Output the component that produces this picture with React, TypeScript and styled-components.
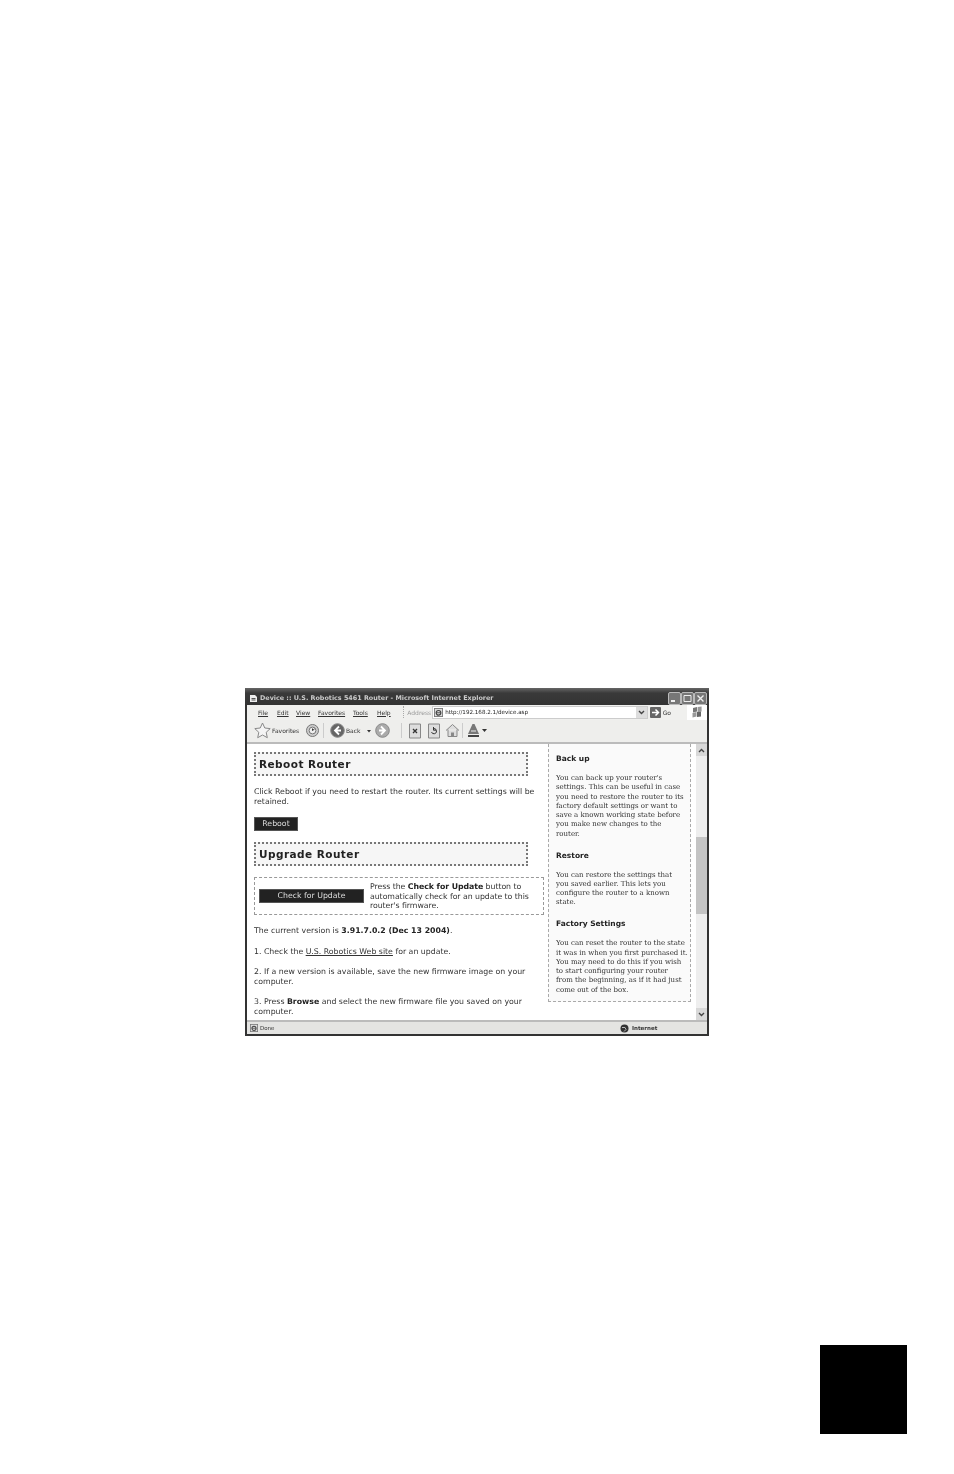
import styled, { createGlobalStyle } from "styled-components";

const Global = createGlobalStyle`
  html, body {
    margin: 0;
    background: #fff;
  }
`;

const Page = styled.div`
  width: 954px;
  height: 1474px;
  display: flex;
  flex-direction: column;
  overflow: hidden;
  background: #fff;
`;

const Window = styled.div`
  box-sizing: border-box;
  width: 464px;
  height: 348px;
  margin: 688px 0 0 245px;
  display: flex;
  flex-direction: column;
  background: #333;
  padding: 0 2px 2px;
  filter: blur(0.45px);
  font-family: "DejaVu Sans", sans-serif;
  color: #222;
`;

const TitleBar = styled.div`
  height: 17px;
  margin: 0 -2px;
  padding: 3px 2px 0 4px;
  box-sizing: border-box;
  display: flex;
  align-items: center;
  gap: 2px;
  background: linear-gradient(#666, #3a3a3a 30%, #333);
  color: #ccc;
  font-size: 6.4px;
  font-weight: 700;
  white-space: nowrap;
`;

const TitleText = styled.span`
  flex: 1;
`;

const WinButton = styled.div`
  box-sizing: border-box;
  width: 13px;
  height: 13px;
  margin-left: -2px;
  border: 1px solid #bbb;
  border-radius: 2px;
  background: #777;
  display: flex;
  align-items: center;
  justify-content: center;
`;

const MenuBar = styled.div`
  box-sizing: border-box;
  height: 15px;
  padding-bottom: 1px;
  display: flex;
  align-items: center;
  background: #f0f0ee;
  font-size: 6px;
  color: #333;
`;

const MenuItem = styled.span<{ $w: number }>`
  width: ${(p) => p.$w}px;
  text-decoration: underline;
  text-decoration-thickness: 0.5px;
  text-underline-offset: 1px;
`;

const MenuItems = styled.div`
  display: flex;
  width: 147px;
  padding-left: 11px;
`;

const Grip = styled.div`
  height: 12px;
  border-left: 1px dotted #aaa;
`;

const AddressLabel = styled.span`
  margin: 0 1px 0 3px;
  color: #999;
`;

const AddressBox = styled.div`
  box-sizing: border-box;
  width: 218px;
  height: 13px;
  display: flex;
  align-items: center;
  gap: 2px;
  background: #fff;
  border: 1px solid #ccc;
  padding-left: 1px;
  font-size: 5.6px;
  color: #222;
`;

const AddressText = styled.span`
  flex: 1;
`;

const Chevron = styled.div`
  width: 11px;
  height: 11px;
  background: #ddd;
  display: flex;
  align-items: center;
  justify-content: center;
`;

const GoGroup = styled.div`
  display: flex;
  align-items: center;
  gap: 2px;
  margin-left: 2px;
  width: 38px;
`;

const Flag = styled.div`
  width: 20px;
  height: 15px;
  margin-left: auto;
  background: #fff;
  display: flex;
  align-items: center;
  justify-content: center;
`;

const ToolBar = styled.div`
  box-sizing: border-box;
  height: 24px;
  padding: 0 0 1px 7px;
  display: flex;
  align-items: center;
  background: #eeeeec;
  border-bottom: 2px solid #bbb;
  font-size: 6px;
  color: #333;
`;

const ToolGroup = styled.div<{ $w: number }>`
  width: ${(p) => p.$w}px;
  display: flex;
  align-items: center;
  gap: 1px;
`;

const Sep = styled.div<{ $after?: number }>`
  width: 1px;
  height: 15px;
  background: #ccc;
  margin-right: ${(p) => p.$after ?? 6}px;
`;

const Body = styled.div`
  flex: 1;
  min-height: 0;
  display: flex;
  background: #fff;
  overflow: hidden;
`;

const Main = styled.div`
  box-sizing: border-box;
  width: 301px;
  padding: 8px 0 0 7px;
  font-size: 7.8px;
  line-height: 9.5px;
  color: #333;
`;

const Heading = styled.h2`
  box-sizing: border-box;
  width: 274px;
  height: 24px;
  margin: 0;
  padding: 2px 0 0 3px;
  display: flex;
  align-items: center;
  border: 2px dotted #777;
  background: #f6f6f6;
  font-size: 10.5px;
  letter-spacing: 0.45px;
  font-weight: 700;
  color: #222;
`;

const Para = styled.p`
  margin: 11px 0 0;
  width: 288px;
`;

const DarkButton = styled.div<{ $w: number }>`
  box-sizing: border-box;
  flex: none;
  width: ${(p) => p.$w}px;
  height: 14px;
  background: #222;
  border: 1px solid #555;
  color: #ddd;
  font-size: 7.8px;
  display: flex;
  align-items: center;
  justify-content: center;
`;

const RebootRow = styled.div`
  margin: 11px 0;
`;

const UpdateBox = styled.div`
  box-sizing: border-box;
  width: 290px;
  height: 38px;
  margin-top: 11px;
  display: flex;
  align-items: center;
  gap: 6px;
  padding-left: 4px;
  border: 1px dashed #999;
`;

const UpdateText = styled.div`
  white-space: nowrap;
  letter-spacing: -0.05px;
  padding-top: 1px;
`;

const Strong = styled.b`
  color: #222;
`;

const SiteLink = styled.span`
  text-decoration: underline;
`;

const Side = styled.div`
  box-sizing: border-box;
  width: 143px;
  height: 258px;
  padding: 10px 0 0 7px;
  border: 1px dashed #aaa;
  border-top: 0;
  background: #fafafa;
`;

const SideTitle = styled.div<{ $first?: boolean }>`
  font-size: 7.5px;
  font-weight: 700;
  line-height: 10px;
  color: #222;
  margin: ${(p) => (p.$first ? 0 : 11.5)}px 0 10px;
`;

const SideText = styled.div`
  font-family: "DejaVu Serif", serif;
  font-size: 7px;
  line-height: 9.3px;
  color: #333;
  white-space: nowrap;
`;

const ScrollBar = styled.div`
  box-sizing: border-box;
  width: 11px;
  margin-left: 5px;
  display: flex;
  flex-direction: column;
  background: #eee;
`;

const ScrollArrow = styled.div`
  height: 12px;
  background: #d8d8d8;
  display: flex;
  align-items: center;
  justify-content: center;
`;

const ScrollTrack = styled.div`
  flex: 1;
  padding-top: 81px;
  padding-bottom: 94px;
  display: flex;
`;

const ScrollThumb = styled.div`
  flex: 1;
  background: #c4c4c4;
`;

const StatusBar = styled.div`
  height: 12px;
  display: flex;
  align-items: center;
  gap: 2px;
  padding-left: 3px;
  background: #e4e4e2;
  border-top: 2px solid #bbb;
  font-size: 5.5px;
  color: #333;
`;

const StatusDone = styled.span`
  width: 358px;
`;

const StatusZone = styled.div`
  display: flex;
  align-items: center;
  gap: 3px;
  font-weight: 700;
`;

const BlackBlock = styled.div`
  width: 87px;
  height: 89px;
  margin: 309px 0 0 820px;
  background: #000;
`;

const IeIcon = ({ size = 9 }: { size?: number }) => (
  <svg width={size} height={size} viewBox="0 0 10 10">
    <rect x="0.5" y="0.5" width="9" height="9" fill="#ddd" stroke="#777" />
    <circle cx="5" cy="5.4" r="2.6" fill="none" stroke="#444" strokeWidth="1.3" />
    <path d="M2.5 5.3h5" stroke="#444" />
  </svg>
);

const RoundButton = ({ dir, fill }: { dir: "left" | "right"; fill: string }) => (
  <svg width="15" height="15" viewBox="0 0 15 15">
    <circle cx="7.5" cy="7.5" r="6.8" fill={fill} stroke="#888" />
    <path
      d={dir === "left" ? "M9 3.5 5 7.5l4 4M5 7.5h6" : "M6 3.5l4 4-4 4M10 7.5H4"}
      fill="none"
      stroke="#fff"
      strokeWidth="1.8"
    />
  </svg>
);

const PageIcon = ({ kind }: { kind: "stop" | "refresh" }) => (
  <svg width="14" height="16" viewBox="0 0 14 16">
    <path d="M1.5 1h11v14h-11z" fill="#ddd" stroke="#888" />
    {kind === "stop" ? (
      <path d="M5 6l4 4M9 6l-4 4" stroke="#333" strokeWidth="1.3" />
    ) : (
      <path d="M4.5 9a2.6 2.6 0 1 0 2-3.4M6.5 4v3.2H9" fill="none" stroke="#333" />
    )}
  </svg>
);

export default function App() {
  return (
    <Page>
      <Global />
      <Window>
        <TitleBar>
          <svg width="9" height="9" viewBox="0 0 9 9">
            <path d="M1 1h5l2 2v5H1z" fill="#eee" />
            <path d="M2.5 4.5h4M2.5 6h4" stroke="#555" />
          </svg>
          <TitleText>Device :: U.S. Robotics 5461 Router - Microsoft Internet Explorer</TitleText>
          <WinButton>
            <svg width="9" height="9" viewBox="0 0 9 9">
              <path d="M1 7h4" stroke="#eee" strokeWidth="2" />
            </svg>
          </WinButton>
          <WinButton>
            <svg width="9" height="9" viewBox="0 0 9 9">
              <path d="M1 1.5h7v6H1z" fill="none" stroke="#eee" />
            </svg>
          </WinButton>
          <WinButton>
            <svg width="9" height="9" viewBox="0 0 9 9">
              <path d="M1.5 1.5l6 6M7.5 1.5l-6 6" stroke="#eee" strokeWidth="1.4" />
            </svg>
          </WinButton>
        </TitleBar>
        <MenuBar>
          <MenuItems>
            <MenuItem $w={19}>File</MenuItem>
            <MenuItem $w={19}>Edit</MenuItem>
            <MenuItem $w={22}>View</MenuItem>
            <MenuItem $w={35}>Favorites</MenuItem>
            <MenuItem $w={24}>Tools</MenuItem>
            <MenuItem $w={16}>Help</MenuItem>
          </MenuItems>
          <Grip />
          <AddressLabel>Address</AddressLabel>
          <AddressBox>
            <IeIcon />
            <AddressText>http://192.168.2.1/device.asp</AddressText>
            <Chevron>
              <svg width="7" height="7" viewBox="0 0 7 7">
                <path d="M1 2l2.5 2.5L6 2" fill="none" stroke="#444" strokeWidth="1.4" />
              </svg>
            </Chevron>
          </AddressBox>
          <GoGroup>
            <svg width="11" height="11" viewBox="0 0 11 11">
              <rect width="11" height="11" rx="1" fill="#666" />
              <path d="M2 5.5h6M5.5 2.5l3 3-3 3" fill="none" stroke="#fff" strokeWidth="1.5" />
            </svg>
            Go
          </GoGroup>
          <Flag>
            <svg width="12" height="12" viewBox="0 0 12 12">
              <path d="M2 2l4-1v4.5l-4 1z" fill="#777" />
              <path d="M6.6 1l4-.5v5l-4 .5z" fill="#999" />
              <path d="M1.5 7l4-1v4.5l-4 1z" fill="#999" />
              <path d="M6 6l4-.5v5l-4 .5z" fill="#666" />
            </svg>
          </Flag>
        </MenuBar>
        <ToolBar>
          <ToolGroup $w={51}>
            <svg width="17" height="17" viewBox="0 0 17 17">
              <path
                d="M8.5 1l2.3 5 5.4.6-4 3.7 1.1 5.4-4.8-2.7-4.8 2.7 1.1-5.4-4-3.7 5.4-.6z"
                fill="#f4f4f4"
                stroke="#888"
              />
            </svg>
            <span>Favorites</span>
          </ToolGroup>
          <ToolGroup $w={18}>
            <svg width="15" height="15" viewBox="0 0 15 15">
              <circle cx="7.5" cy="7.5" r="6" fill="#ccc" stroke="#777" />
              <circle cx="7.5" cy="7.5" r="3.4" fill="#eee" stroke="#777" />
              <path d="M7.5 5.5v2l2-1.5" fill="none" stroke="#333" />
            </svg>
          </ToolGroup>
          <Sep />
          <ToolGroup $w={45}>
            <RoundButton dir="left" fill="#666" />
            <span>Back</span>
            <svg width="6" height="6" viewBox="0 0 6 6" style={{ marginLeft: 4 }}>
              <path d="M1 2h4L3 4.5z" fill="#333" />
            </svg>
          </ToolGroup>
          <ToolGroup $w={26}>
            <RoundButton dir="right" fill="#aaa" />
          </ToolGroup>
          <Sep />
          <ToolGroup $w={19}>
            <PageIcon kind="stop" />
          </ToolGroup>
          <ToolGroup $w={18}>
            <PageIcon kind="refresh" />
          </ToolGroup>
          <ToolGroup $w={17}>
            <svg width="15" height="15" viewBox="0 0 15 15">
              <path d="M1 7.5L7.5 1.5 14 7.5M3 6.5v7h9v-7" fill="#ddd" stroke="#888" />
              <path d="M6 13.5v-4h3v4" fill="#888" />
            </svg>
          </ToolGroup>
          <Sep $after={4} />
          <ToolGroup $w={20}>
            <svg width="14" height="15" viewBox="0 0 14 15">
              <path d="M1 11L5.5 1h2L12 11z" fill="#777" />
              <path d="M4 8h5" stroke="#eee" />
              <path d="M1 13h11" stroke="#444" strokeWidth="2" />
            </svg>
            <svg width="5" height="5" viewBox="0 0 5 5">
              <path d="M0 1h5L2.5 4z" fill="#333" />
            </svg>
          </ToolGroup>
        </ToolBar>
        <Body>
          <Main>
            <Heading>Reboot Router</Heading>
            <Para>Click Reboot if you need to restart the router. Its current settings will be retained.</Para>
            <RebootRow>
              <DarkButton $w={44}>Reboot</DarkButton>
            </RebootRow>
            <Heading>Upgrade Router</Heading>
            <UpdateBox>
              <DarkButton $w={105}>Check for Update</DarkButton>
              <UpdateText>
                Press the <Strong>Check for Update</Strong> button to
                <br />
                automatically check for an update to this
                <br />
                router's firmware.
              </UpdateText>
            </UpdateBox>
            <Para>
              The current version is <Strong>3.91.7.0.2 (Dec 13 2004)</Strong>.
            </Para>
            <Para>
              1. Check the <SiteLink>U.S. Robotics Web site</SiteLink> for an update.
            </Para>
            <Para>2. If a new version is available, save the new firmware image on your computer.</Para>
            <Para>
              3. Press <Strong>Browse</Strong> and select the new firmware file you saved on your
              <br />
              computer.
            </Para>
          </Main>
          <Side>
            <SideTitle $first>Back up</SideTitle>
            <SideText>
              You can back up your router's
              <br />
              settings. This can be useful in case
              <br />
              you need to restore the router to its
              <br />
              factory default settings or want to
              <br />
              save a known working state before
              <br />
              you make new changes to the
              <br />
              router.
            </SideText>
            <SideTitle>Restore</SideTitle>
            <SideText>
              You can restore the settings that
              <br />
              you saved earlier. This lets you
              <br />
              configure the router to a known
              <br />
              state.
            </SideText>
            <SideTitle>Factory Settings</SideTitle>
            <SideText>
              You can reset the router to the state
              <br />
              it was in when you first purchased it.
              <br />
              You may need to do this if you wish
              <br />
              to start configuring your router
              <br />
              from the beginning, as if it had just
              <br />
              come out of the box.
            </SideText>
          </Side>
          <ScrollBar>
            <ScrollArrow>
              <svg width="7" height="7" viewBox="0 0 7 7">
                <path d="M1 5l2.5-2.5L6 5" fill="none" stroke="#444" strokeWidth="1.4" />
              </svg>
            </ScrollArrow>
            <ScrollTrack>
              <ScrollThumb />
            </ScrollTrack>
            <ScrollArrow>
              <svg width="7" height="7" viewBox="0 0 7 7">
                <path d="M1 2l2.5 2.5L6 2" fill="none" stroke="#444" strokeWidth="1.4" />
              </svg>
            </ScrollArrow>
          </ScrollBar>
        </Body>
        <StatusBar>
          <IeIcon size={8} />
          <StatusDone>Done</StatusDone>
          <StatusZone>
            <svg width="9" height="9" viewBox="0 0 9 9">
              <circle cx="4.5" cy="4.5" r="4" fill="#333" />
              <path d="M2 3.5h3l1 2-2 2" fill="none" stroke="#bbb" />
            </svg>
            Internet
          </StatusZone>
        </StatusBar>
      </Window>
      <BlackBlock />
    </Page>
  );
}
